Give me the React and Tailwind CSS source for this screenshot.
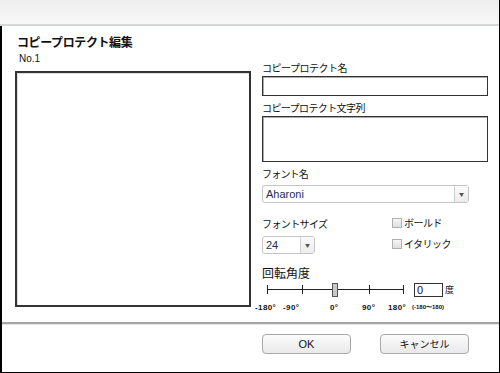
export default function App() {
  const ticks = [5, 40, 107, 141];
  const labels = [
    { left: -7, text: '-180°' },
    { left: 21, text: '-90°' },
    { left: 68, text: '0°' },
    { left: 100, text: '90°' },
    { left: 126, text: '180°' },
  ];

  return (
    <div
      className="w-[500px] h-[373px] bg-white border-r border-b border-black flex flex-col text-[#111] overflow-hidden"
      style={{ fontFamily: '"Noto Sans CJK JP", "Liberation Sans", sans-serif' }}
    >
      <div className="h-[26px] shrink-0 bg-gradient-to-b from-[#eeeeee] to-[#f7f7f7] border-b-2 border-[#d4d8d8]" />

      <div className="flex-1 border-l-2 border-black flex flex-col">
        <div className="flex h-[296px] shrink-0">
          {/* left column */}
          <div className="w-[248px] pl-[13px] pt-[8px] flex flex-col">
            <div className="text-[12px] font-bold leading-[16px] tracking-[-0.4px] pl-[2px]">コピープロテクト編集</div>
            <div className="mt-[3px] text-[10px] leading-[12px] pl-[4px] font-['Liberation_Sans']">No.1</div>
            <div className="mt-[6px] w-[236px] h-[236px] border-2 border-[#333] shadow-[inset_1px_1px_0_#ddd]" />
          </div>

          {/* right column */}
          <div className="flex-1 pl-[12px] pt-[35px] text-[10px] flex flex-col">
            <div className="leading-[14px] tracking-[-0.5px]">コピープロテクト名</div>
            <div className="mt-[1px] w-[226px] h-[20px] border border-[#333] shadow-[inset_1px_1px_0_#aaa]" />
            <div className="mt-[5px] leading-[14px] tracking-[-0.6px]">コピープロテクト文字列</div>
            <div className="mt-[1px] w-[226px] h-[46px] border border-[#333] shadow-[inset_1px_1px_0_#aaa]" />
            <div className="mt-[5px] leading-[14px] tracking-[-0.8px]">フォント名</div>
            <div className="mt-[4px] w-[207px] h-[18px] flex border border-[#c4c4c4] rounded-[3px] bg-white">
              <div className="flex-1 px-[3px] text-[11px] leading-[16px] text-[#1c2f55] font-['Liberation_Sans']">Aharoni</div>
              <div className="w-[14px] border-l border-[#d0d0d0] bg-gradient-to-b from-[#fafafa] to-[#ececec] flex items-center justify-center text-[5px] text-[#555]">▼</div>
            </div>

            <div className="mt-[14px] flex">
              <div className="w-[130px]">
                <div className="leading-[14px] tracking-[-0.6px]">フォントサイズ</div>
                <div className="mt-[5px] w-[53px] h-[18px] flex border border-[#c4c4c4] rounded-[3px] bg-white">
                  <div className="flex-1 px-[3px] text-[11px] leading-[16px] text-[#1c2f55] font-['Liberation_Sans']">24</div>
                  <div className="w-[14px] border-l border-[#d0d0d0] bg-gradient-to-b from-[#fafafa] to-[#ececec] flex items-center justify-center text-[5px] text-[#555]">▼</div>
                </div>
              </div>
              <div className="flex flex-col gap-[7px] -mt-[1px]">
                <label className="flex items-center gap-[2px] leading-[14px] tracking-[-0.5px]">
                  <span className="w-[10px] h-[10px] border border-[#b0b0b0] bg-gradient-to-b from-[#f6f6f6] to-[#dedede]" />
                  ボールド
                </label>
                <label className="flex items-center gap-[2px] leading-[14px] tracking-[-0.5px]">
                  <span className="w-[10px] h-[10px] border border-[#b0b0b0] bg-gradient-to-b from-[#f6f6f6] to-[#dedede]" />
                  イタリック
                </label>
              </div>
            </div>

            <div className="mt-[11px] text-[12px] leading-[15px]">回転角度</div>
            <div className="flex items-start">
              <div className="relative w-[147px] h-[32px]">
                <div className="absolute left-[5px] top-[9px] w-[137px] h-px bg-[#222]" />
                {ticks.map((x) => (
                  <div key={x} className="absolute top-[5px] w-px h-[9px] bg-[#222]" style={{ left: x }} />
                ))}
                <div className="absolute left-[70px] top-[3px] w-[6px] h-[14px] border border-[#555] bg-[#c8c8c8]" />
                {labels.map((l) => (
                  <div
                    key={l.text}
                    className="absolute top-[23px] whitespace-nowrap text-[8px] font-bold leading-[10px] tracking-[0.4px] font-['Liberation_Sans']"
                    style={{ left: l.left }}
                  >
                    {l.text}
                  </div>
                ))}
              </div>
              <div className="ml-[5px] mt-[3px] flex flex-col">
                <div className="flex items-center">
                  <div className="w-[29px] h-[14px] border border-[#333] pl-[2px] text-[11px] leading-[12px] font-['Liberation_Sans']">0</div>
                  <span className="ml-[2px] text-[9px] leading-[12px]">度</span>
                </div>
                <div className="mt-[6px] -ml-[2px] whitespace-nowrap text-[6px] leading-[8px] font-bold font-['Liberation_Sans']">(-180〜180)</div>
              </div>
            </div>
          </div>
        </div>

        <div className="h-[3px] shrink-0 border-t-2 border-[#a5a5a5] bg-[#e6e6e6]" />

        <div className="flex-1 flex pl-[260px] pt-[9px] gap-[29px]">
          <button className="w-[89px] h-[20px] rounded-[4px] border border-[#a8a8a8] bg-gradient-to-b from-[#fbfbfb] to-[#e9e9e9] text-[11px] leading-[18px] font-['Liberation_Sans']">
            OK
          </button>
          <button className="w-[89px] h-[20px] rounded-[4px] border border-[#a8a8a8] bg-gradient-to-b from-[#fbfbfb] to-[#e9e9e9] text-[10px] leading-[18px]">
            キャンセル
          </button>
        </div>
      </div>
    </div>
  );
}
